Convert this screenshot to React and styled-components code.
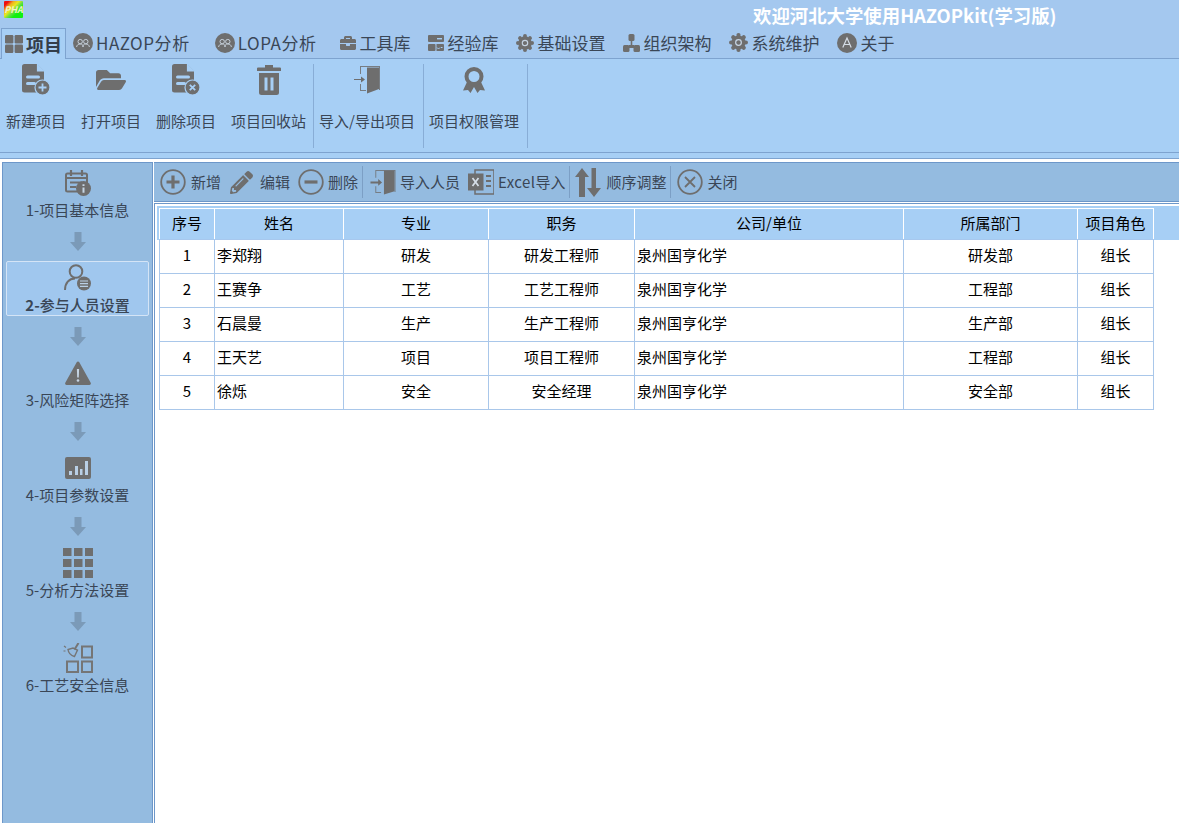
import styled, { createGlobalStyle } from "styled-components";
import { FaBriefcase, FaFolderOpen, FaPencilAlt } from "react-icons/fa";

const GREY = "#6e6e6e";
const BLUE = "#a7cff5";

const GlobalStyle = createGlobalStyle`
    html, body {
        margin: 0;
        padding: 0;
        background: #ffffff;
    }
    * {
        box-sizing: border-box;
    }
    body {
        font-family: "Noto Sans CJK SC", "Noto Sans", "Liberation Sans", sans-serif;
    }
`;

const people = [
    ["1", "李郑翔", "研发", "研发工程师", "泉州国亨化学", "研发部", "组长"],
    ["2", "王赛争", "工艺", "工艺工程师", "泉州国亨化学", "工程部", "组长"],
    ["3", "石晨曼", "生产", "生产工程师", "泉州国亨化学", "生产部", "组长"],
    ["4", "王天艺", "项目", "项目工程师", "泉州国亨化学", "工程部", "组长"],
    ["5", "徐烁", "安全", "安全经理", "泉州国亨化学", "安全部", "组长"],
];

const columns = [
    ["序号", 55],
    ["姓名", 129],
    ["专业", 145],
    ["职务", 146],
    ["公司/单位", 269],
    ["所属部门", 174],
    ["项目角色", 76],
];

/* ---------- icons ---------- */

const GridIcon = () => (
    <svg width="18" height="18" viewBox="0 0 18 18" fill={GREY}>
        <rect width="8.4" height="8.4" rx="1.2" />
        <rect x="9.6" width="8.4" height="8.4" rx="1.2" />
        <rect y="9.6" width="8.4" height="8.4" rx="1.2" />
        <rect x="9.6" y="9.6" width="8.4" height="8.4" rx="1.2" />
    </svg>
);

const PeopleIcon = () => (
    <svg width="20" height="20" viewBox="0 0 20 20">
        <circle cx="10" cy="10" r="10" fill={GREY} />
        <g fill="none" stroke="#c5cfd9" strokeWidth="1">
            <circle cx="7.2" cy="8.6" r="2.2" />
            <circle cx="12.8" cy="8.6" r="2.2" />
            <path d="M3.6 14c.3-2 1.6-3 3.6-3s3 .9 2.8 3M10 14c-.2-2 .8-3 2.8-3s3.3 1 3.6 3" />
        </g>
    </svg>
);

const ServerIcon = () => (
    <svg width="16" height="16" viewBox="0 0 16 16" fill={GREY}>
        <rect width="16" height="7" rx="1" />
        <rect y="9" width="7.5" height="7" rx="1" />
        <path d="M8.5 9H15a1 1 0 0 1 1 1v5a1 1 0 0 1-1 1H8.500z" />
        <path d="M9 12.500l1.500 1.500 1.500-1.500M13 12.500h1.500" stroke={BLUE} fill="none" />
        <rect x="9" y="3" width="5" height="1.400" fill={BLUE} />
    </svg>
);

const OrgIcon = () => (
    <svg width="17" height="18" viewBox="0 0 17 18" fill={GREY}>
        <rect x="5.500" width="6" height="7" rx="1.500" />
        <rect y="11" width="6.500" height="7" rx="1.500" />
        <rect x="10.500" y="11" width="6.500" height="7" rx="1.500" />
        <path d="M7.700 6h1.600v5h1.700v3H6v-3h1.700z" />
    </svg>
);

const GearIcon = ({ size = 18 }) => (
    <svg width={size} height={size} viewBox="0 0 20 20">
        <circle cx="10" cy="10" r="7.500" fill={GREY} />
        {[0, 45, 90, 135, 180, 225, 270, 315].map((deg) => (
            <circle key={deg} cx="10" cy="2.200" r="2.200" fill={GREY} transform={`rotate(${deg} 10 10)`} />
        ))}
        <circle cx="10" cy="10" r="3" fill="none" stroke="#c5d3e2" strokeWidth="1.300" />
    </svg>
);

const AboutIcon = () => (
    <svg width="20" height="20" viewBox="0 0 20 20">
        <circle cx="10" cy="10" r="10" fill={GREY} />
        <path d="M5.800 14.500L10 5l4.200 9.500M7.300 11.500h5.400" fill="none" stroke="#d5dde6" strokeWidth="1.200" />
    </svg>
);

const DocIcon = ({ badge }) => (
    <svg width="28" height="31" viewBox="0 0 28 31">
        <path d="M2.500 0H15l7 7v19a2.500 2.500 0 0 1-2.500 2.500h-17A2.500 2.500 0 0 1 0 26V2.500A2.500 2.500 0 0 1 2.500 0z" fill={GREY} />
        <path d="M15.500 0v7h7" fill={BLUE} stroke={BLUE} strokeWidth="1.200" />
        <rect x="4" y="11.500" width="14" height="3" rx="1.500" fill={BLUE} />
        <rect x="4" y="18" width="10" height="3" rx="1.500" fill={BLUE} />
        <circle cx="20.500" cy="23.500" r="7.500" fill={GREY} stroke={BLUE} strokeWidth="1.200" />
        {badge === "plus" ? (
            <path d="M20.500 19.500v8M16.500 23.500h8" stroke={BLUE} strokeWidth="1.800" />
        ) : (
            <path d="M17.800 20.800l5.400 5.400M23.200 20.800l-5.400 5.400" stroke={BLUE} strokeWidth="1.800" />
        )}
    </svg>
);

const TrashIcon = () => (
    <svg width="24" height="30" viewBox="0 0 24 30" fill={GREY}>
        <path d="M8 0h8v2.500h7a1 1 0 0 1 1 1V6H0V3.500a1 1 0 0 1 1-1h7z" />
        <path d="M2 8h20v19.500a2.500 2.500 0 0 1-2.500 2.500h-15A2.500 2.500 0 0 1 2 27.500zM7.500 12.500V25.500h3V12.500zM13.500 12.500V25.500h3V12.500z" fillRule="evenodd" />
    </svg>
);

const DoorIcon = () => (
    <svg width="26" height="26" viewBox="0 0 26 27" fill={GREY}>
        <path d="M5 1h21v23h-1V2H6v7H5zM5 18h1v6h5v1H5z" opacity=".8" />
        <path d="M14 1.500l11 0V23l-11 3.500z" />
        <path d="M0 13h8V10.500l4 3.500-4 3.500V15H0z" />
    </svg>
);

const RibbonDoor = () => (
    <svg width="26" height="28" viewBox="0 0 26 28" fill={GREY}>
        <path d="M6 0h20v24h-1V1H7v7H6zM6 18h1v6h5v1H6z" opacity=".85" />
        <path d="M13 1.500l12 0V23l-12 4.500z" />
        <path d="M0 13h7V10.500l4 3-4 3V14H0z" />
    </svg>
);

const AwardIcon = () => (
    <svg width="24" height="26" viewBox="0 0 24 26" fill={GREY}>
        <path d="M5 15L1 23.500l5-.5 2.500 3 3.500-6 3.500 6 2.500-3 5 .5L19 15z" />
        <circle cx="12" cy="9.500" r="7.500" fill={BLUE} stroke={GREY} strokeWidth="4" />
    </svg>
);

const CircleIcon = ({ kind }) => (
    <svg width="26" height="26" viewBox="0 0 26 26" fill="none" stroke={GREY}>
        <circle cx="13" cy="13" r="11.800" strokeWidth="1.800" />
        {kind === "plus" && <path d="M13 6.500v13M6.500 13h13" strokeWidth="3.200" />}
        {kind === "minus" && <path d="M6.500 13h13" strokeWidth="3.200" />}
        {kind === "close" && <path d="M8 8l10 10M18 8L8 18" strokeWidth="1.800" />}
    </svg>
);

const ExcelIcon = () => (
    <svg width="26" height="26" viewBox="0 0 26 26">
        <path d="M7 1h19v24H7z" fill="none" stroke={GREY} strokeWidth="1.500" />
        <path d="M18 7h5M18 12h5M18 17h5" stroke={GREY} strokeWidth="1.800" />
        <rect y="4.500" width="15.500" height="17" fill={GREY} />
        <path d="M4.500 9l6 8M10.500 9l-6 8" stroke="#d7dfe8" strokeWidth="1.700" />
    </svg>
);

const SortIcon = () => (
    <svg width="26" height="29" viewBox="0 0 26 29" fill={GREY}>
        <path d="M7 0l7 9H10v20H4V9H0z" />
        <path d="M16.500 0h4.500v20h5l-7 9-7-9h4.500z" />
    </svg>
);

const CalendarIcon = () => (
    <svg width="26" height="26" viewBox="0 0 26 26">
        <path d="M2.500 3.500h18a1.500 1.500 0 0 1 1.500 1.500v15a1.500 1.500 0 0 1-1.500 1.500h-18A1.500 1.500 0 0 1 1 20V5a1.500 1.500 0 0 1 1.500-1.500z" fill="none" stroke={GREY} strokeWidth="2" />
        <path d="M6 0v6M17 0v6" stroke={GREY} strokeWidth="2.200" />
        <path d="M1 8h21" stroke={GREY} strokeWidth="2" />
        <path d="M5 12.500h12M5 17h6" stroke={GREY} strokeWidth="1.800" />
        <circle cx="18.500" cy="18.500" r="7.500" fill={GREY} />
        <path d="M18.500 14.200v1.800M18.500 17.500v5.300" stroke="#c6d5e4" strokeWidth="2" />
    </svg>
);

const PersonIcon = () => (
    <svg width="27" height="27" viewBox="0 0 27 27" fill="none">
        <circle cx="12" cy="7.500" r="6.300" stroke={GREY} strokeWidth="2" />
        <path d="M1 26c0-7 4-11.500 10-11.500" stroke={GREY} strokeWidth="2" />
        <circle cx="20" cy="19.500" r="7" fill={GREY} />
        <path d="M16 17h8M16 19.700h8M16 22.400h8" stroke="#b9cfe5" strokeWidth="1.200" />
    </svg>
);

const WarningIcon = () => (
    <svg width="26" height="24" viewBox="0 0 26 24">
        <path d="M13 .5c.6 0 1 .3 1.300.8l11.400 20.500c.5 1-.1 2.200-1.300 2.200H1.600C.4 24-.2 22.800.3 21.800L11.700 1.300c.3-.5.700-.8 1.300-.8z" fill={GREY} />
        <path d="M11.900 8h2.200l-.3 8.500h-1.600z" fill="#c6d5e4" />
        <circle cx="13" cy="19.500" r="1.300" fill="#c6d5e4" />
    </svg>
);

const ChartIcon = () => (
    <svg width="26" height="22" viewBox="0 0 26 22">
        <rect width="26" height="22" rx="2" fill={GREY} />
        <path d="M4 14h3v4H4zM10 9h3v9h-3zM15 12h2.500v6H15zM20 4h3v14h-3z" fill="#b9cfe5" />
    </svg>
);

const MatrixIcon = () => (
    <svg width="30" height="30" viewBox="0 0 30 30" fill={GREY}>
        {[0, 11, 22].map((y) =>
            [0, 11, 22].map((x) => <rect key={`${x}-${y}`} x={x} y={y} width="8.500" height="8" />)
        )}
    </svg>
);

const SafetyIcon = () => (
    <svg width="30" height="30" viewBox="0 0 30 30" fill="none" stroke="#757575" strokeWidth="2">
        <rect x="19" y="3.500" width="10" height="11" />
        <rect x="4" y="18.500" width="11" height="10.500" />
        <rect x="19" y="18.500" width="10" height="10.500" />
        <path d="M15.500 0l-4 6.500" />
        <path d="M5 6.500c.5 3.500 3 6 6.500 7l3-6.500-4.500-2z" strokeWidth="1.400" />
        <path d="M1 3l2 1.500M.5 8h2" strokeWidth="1.200" />
    </svg>
);

const DownArrow = () => (
    <svg width="16" height="19" viewBox="0 0 16 19" fill="#7b9ab8">
        <path d="M4.500 0h7v10H16l-8 9-8-9h4.500z" />
    </svg>
);

/* ---------- data for the bars ---------- */

const tabs = [
    { label: "HAZOP分析", icon: <PeopleIcon />, extra: 7, latin: true },
    { label: "LOPA分析", icon: <PeopleIcon />, extra: 6, latin: true },
    { label: "工具库", icon: <FaBriefcase size={16} color={GREY} /> },
    { label: "经验库", icon: <ServerIcon /> },
    { label: "基础设置", icon: <GearIcon /> },
    { label: "组织架构", icon: <OrgIcon /> },
    { label: "系统维护", icon: <GearIcon size={19} /> },
    { label: "关于", icon: <AboutIcon /> },
];

const ribbonGroups = [
    [
        { label: "新建项目", icon: <DocIcon badge="plus" /> },
        { label: "打开项目", icon: <FaFolderOpen size={30} color={GREY} /> },
        { label: "删除项目", icon: <DocIcon badge="x" /> },
        { label: "项目回收站", icon: <TrashIcon /> },
    ],
    [{ label: "导入/导出项目", icon: <RibbonDoor /> }],
    [{ label: "项目权限管理", icon: <AwardIcon /> }],
];

const steps = [
    { no: "1", label: "项目基本信息", icon: <CalendarIcon /> },
    { no: "2", label: "参与人员设置", icon: <PersonIcon />, active: true },
    { no: "3", label: "风险矩阵选择", icon: <WarningIcon /> },
    { no: "4", label: "项目参数设置", icon: <ChartIcon /> },
    { no: "5", label: "分析方法设置", icon: <MatrixIcon /> },
    { no: "6", label: "工艺安全信息", icon: <SafetyIcon /> },
];

export default function App() {
    return (
        <Page>
            <GlobalStyle />
            <TitleBar>
                <Logo>PHA</Logo>
                <Title>欢迎河北大学使用HAZOPkit(学习版)</Title>
            </TitleBar>
            <TabBar>
                <ActiveTab>
                    <GridIcon />
                    项目
                </ActiveTab>
                {tabs.map((tab) => (
                    <Tab key={tab.label} $extra={tab.extra} $latin={tab.latin}>
                        {tab.icon}
                        {tab.label}
                    </Tab>
                ))}
            </TabBar>
            <Ribbon>
                {ribbonGroups.map((group, i) => (
                    <RibbonGroup key={i}>
                        {group.map((item) => (
                            <RibbonButton key={item.label}>
                                <RibbonIcon>{item.icon}</RibbonIcon>
                                {item.label}
                            </RibbonButton>
                        ))}
                    </RibbonGroup>
                ))}
            </Ribbon>
            <RibbonFooter />
            <Body>
                <Sidebar>
                    {steps.map((step, i) => (
                        <StepWrap key={step.no}>
                            {i > 0 && (
                                <StepArrow>
                                    <DownArrow />
                                </StepArrow>
                            )}
                            <Step $active={step.active}>
                                <StepIcon>{step.icon}</StepIcon>
                                <StepLabel $active={step.active}>
                                    <b>{step.no}-</b>
                                    {step.label}
                                </StepLabel>
                            </Step>
                        </StepWrap>
                    ))}
                </Sidebar>
                <Main>
                    <Toolbar>
                        <ToolButton><CircleIcon kind="plus" />新增</ToolButton>
                        <ToolButton><PencilBox><FaPencilAlt size={23} color={GREY} /></PencilBox>编辑</ToolButton>
                        <ToolButton><CircleIcon kind="minus" />删除</ToolButton>
                        <ToolSeparator />
                        <ToolButton><DoorIcon />导入人员</ToolButton>
                        <ToolButton><ExcelIcon /><Latin>Excel</Latin>导入</ToolButton>
                        <ToolSeparator />
                        <ToolButton><SortBox><SortIcon /></SortBox>顺序调整</ToolButton>
                        <ToolSeparator />
                        <ToolButton><CircleIcon kind="close" />关闭</ToolButton>
                    </Toolbar>
                    <TableArea>
                        <Table>
                            <colgroup>
                                {columns.map(([name, width]) => (
                                    <col key={name} style={{ width }} />
                                ))}
                            </colgroup>
                            <thead>
                                <tr>
                                    {columns.map(([name]) => (
                                        <HeadCell key={name}>{name}</HeadCell>
                                    ))}
                                </tr>
                            </thead>
                            <tbody>
                                {people.map((row) => (
                                    <tr key={row[0]}>
                                        {row.map((value, i) => (
                                            <Cell key={i} $left={i === 1 || i === 4}>
                                                {value}
                                            </Cell>
                                        ))}
                                    </tr>
                                ))}
                            </tbody>
                        </Table>
                    </TableArea>
                </Main>
            </Body>
        </Page>
    );
}

const Page = styled.div`
    width: 1179px;
    height: 823px;
    display: flex;
    flex-direction: column;
    overflow: hidden;
    background: #ffffff;
`;

const TitleBar = styled.div`
    height: 28px;
    flex: none;
    display: flex;
    background: #a4c8ef;
`;

const Logo = styled.div`
    width: 19px;
    height: 17px;
    margin: 1px 0 0 4px;
    font-size: 9px;
    font-style: italic;
    font-weight: 700;
    line-height: 17px;
    text-align: center;
    color: #f4f4c8;
    background: linear-gradient(135deg, #f01010 0 14%, #f0b020 28%, #e8e820 42%, #60e040 56%, #10f010 70%);
    border-radius: 1px;
`;

const Title = styled.div`
    margin-left: 730px;
    font-size: 18.4px;
    font-weight: 700;
    line-height: 31px;
    color: #ffffff;
    white-space: nowrap;
`;

const TabBar = styled.div`
    height: 31px;
    flex: none;
    display: flex;
    align-items: flex-end;
    gap: 18px;
    background: #a4c8ef;
    border-bottom: 1px solid #7ea3cf;
`;

const Tab = styled.div`
    height: 30px;
    padding-bottom: 1px;
    display: flex;
    align-items: center;
    gap: 3px;
    margin-right: ${(p) => p.$extra || 0}px;
    font-size: 17px;
    letter-spacing: ${(p) => (p.$latin ? "0.55px" : "0")};
    color: #3a4656;
    white-space: nowrap;
`;

const ActiveTab = styled(Tab)`
    width: 65px;
    height: 31px;
    margin: 0 -11px 0 1px;
    padding: 0 0 0 3px;
    position: relative;
    top: 1px;
    font-size: 18px;
    font-weight: 700;
    color: #343e4a;
    background: ${BLUE};
    border: 1px solid #7ea3cf;
    border-bottom: none;
`;

const Ribbon = styled.div`
    height: 94px;
    flex: none;
    display: flex;
    padding-top: 5px;
    background: ${BLUE};
    border-bottom: 1px solid #7ea3cf;
`;

const RibbonGroup = styled.div`
    height: 84px;
    display: flex;
    gap: 15px;
    padding: 0 8px 0 5px;
    border-right: 1px solid #88add6;

    &:first-child {
        padding: 0 7px 0 6px;
    }
`;

const RibbonButton = styled.div`
    display: flex;
    flex-direction: column;
    align-items: center;
    font-size: 15px;
    line-height: 20px;
    color: #3a4656;
    white-space: nowrap;
`;

const RibbonIcon = styled.div`
    height: 31px;
    margin-bottom: 16px;
    display: flex;
    align-items: center;
    justify-content: center;
`;

const RibbonFooter = styled.div`
    height: 6px;
    flex: none;
    background: ${BLUE};
    border-bottom: 1px solid #7ea3cf;
`;

const Body = styled.div`
    flex: 1;
    min-height: 0;
    display: flex;
    padding: 3px 0 0 2px;
`;

const Sidebar = styled.div`
    width: 151px;
    flex: none;
    padding: 3px 3px 0;
    background: #94bbe0;
    border: 1px solid #6d97c9;
    border-bottom: none;
`;

const StepWrap = styled.div`
    display: flex;
    flex-direction: column;
`;

const StepArrow = styled.div`
    height: 40px;
    display: flex;
    align-items: center;
    justify-content: center;
`;

const Step = styled.div`
    height: 55px;
    display: flex;
    flex-direction: column;
    align-items: center;
    background: ${(p) => (p.$active ? "#a0c7ee" : "transparent")};
    border: 1px solid ${(p) => (p.$active ? "#d4e4f6" : "transparent")};
    border-radius: 2px;
`;

const StepIcon = styled.div`
    height: 31px;
    flex: none;
    margin-bottom: 2px;
    display: flex;
    align-items: center;
    justify-content: center;
`;

const StepLabel = styled.div`
    font-size: 15px;
    line-height: 20px;
    color: #3a4656;
    font-weight: ${(p) => (p.$active ? 500 : 400)};
    white-space: nowrap;

    b {
        font-weight: ${(p) => (p.$active ? 700 : 400)};
    }
`;

const Main = styled.div`
    flex: 1;
    min-width: 0;
    margin-left: 1px;
    display: flex;
    flex-direction: column;
`;

const Toolbar = styled.div`
    height: 40px;
    flex: none;
    display: flex;
    align-items: center;
    padding: 0 0 2px 7px;
    background: #94bbe0;
    border-top: 1px solid #6d97c9;
    border-bottom: 1px solid #6d97c9;
`;

const ToolButton = styled.div`
    display: flex;
    align-items: center;
    gap: 4px;
    margin-right: 8px;
    font-size: 15px;
    color: #3a4656;
    white-space: nowrap;

    svg {
        margin-top: 2px;
    }

    &:first-child {
        gap: 5px;
        margin-left: -1px;
    }

    &:last-child {
        margin-left: -1px;
    }
`;

const Latin = styled.span`
    letter-spacing: 0.4px;
    margin-right: -4px;
`;

const PencilBox = styled.span`
    width: 27px;
    padding-left: 1px;
    display: flex;
`;

const SortBox = styled.span`
    display: flex;
    margin: 0 1px 0 -2px;
`;

const ToolSeparator = styled.div`
    width: 1px;
    height: 32px;
    margin: 2px 7px 0 -4px;
    background: #7c9fc5;
`;

const TableArea = styled.div`
    flex: 1;
    position: relative;
    margin-top: 1px;
    padding: 4px 0 0 4px;
    background: #ffffff;
    border-top: 1px solid #6d97c9;
    border-left: 1px solid #6d97c9;

    &::before {
        content: "";
        position: absolute;
        top: 2px;
        left: 2px;
        right: 0;
        height: 34px;
        background: ${BLUE};
    }
`;

const Table = styled.table`
    position: relative;
    width: 994px;
    table-layout: fixed;
    border-collapse: collapse;
    font-size: 15px;
    color: #000000;
`;

const HeadCell = styled.th`
    height: 31px;
    padding: 0 0 3px;
    font-weight: 400;
    text-align: center;
    border: 1px solid #ffffff;
    border-bottom-color: #a7c8ee;
`;

const Cell = styled.td`
    height: 34px;
    padding: 0 0 5px ${(p) => (p.$left ? "2px" : "0")};
    text-align: ${(p) => (p.$left ? "left" : "center")};
    border: 1px solid #a9c7ea;
    white-space: nowrap;
`;
